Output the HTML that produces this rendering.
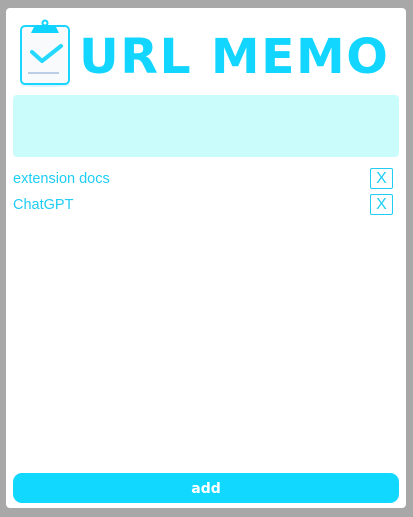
<!DOCTYPE html>
<html><head><style>
body{margin:0;background:#a8a8a8;width:413px;height:517px;overflow:hidden;font-family:"Liberation Sans",sans-serif;position:relative}
.card{position:absolute;left:6px;top:8px;width:400px;height:500px;background:#fff;border-radius:4px}
.title{position:absolute;left:79px;top:29px;font-family:"DejaVu Sans",sans-serif;font-weight:bold;font-size:48px;color:#12d6ff;line-height:56px;white-space:nowrap;letter-spacing:1.5px;transform:scaleX(1.02);transform-origin:left}
.ta{position:absolute;left:13px;top:95px;width:386px;height:62px;background:#cafcfc;border-radius:4px}
.item{position:absolute;left:13px;font-size:14.5px;color:#1fcdf5}
.x{position:absolute;left:370px;width:21px;height:19px;border:1px solid #1fcdf5;border-radius:2px;color:#1fcdf5;font-size:16px;text-align:center;line-height:20px}
.add{position:absolute;left:13px;top:473px;width:386px;height:30px;background:#10d8ff;border-radius:9px;color:#fff;font-family:"DejaVu Sans",sans-serif;font-weight:bold;font-size:14px;text-align:center;line-height:32px}
</style></head><body>
<div class="card"></div>
<svg style="position:absolute;left:0;top:0" width="90" height="95">
<ellipse cx="45" cy="85" rx="25" ry="2" fill="#d8f4fc"/>
<rect x="21" y="26" width="48" height="58" rx="4" fill="#f8fafc" stroke="#1ad6ff" stroke-width="2"/>
<path d="M35 25 L55 25 L59 33 L31 33 Z" fill="#10d4ff"/>
<circle cx="45" cy="23" r="3.5" fill="#10d4ff"/><circle cx="45" cy="23" r="1.5" fill="#fff"/>
<path d="M32 52 L42 61 L61 46" fill="none" stroke="#24d8ff" stroke-width="4" stroke-linecap="round" stroke-linejoin="round"/>
<line x1="28" y1="73" x2="59" y2="73" stroke="#a8c0dc" stroke-width="1.5"/>
</svg>
<div class="title">URL MEMO</div>
<div class="ta"></div>
<div class="item" style="top:171px">extension docs</div>
<div class="x" style="top:168px">X</div>
<div class="item" style="top:197px">ChatGPT</div>
<div class="x" style="top:194px">X</div>
<div class="add">add</div>
</body></html>
